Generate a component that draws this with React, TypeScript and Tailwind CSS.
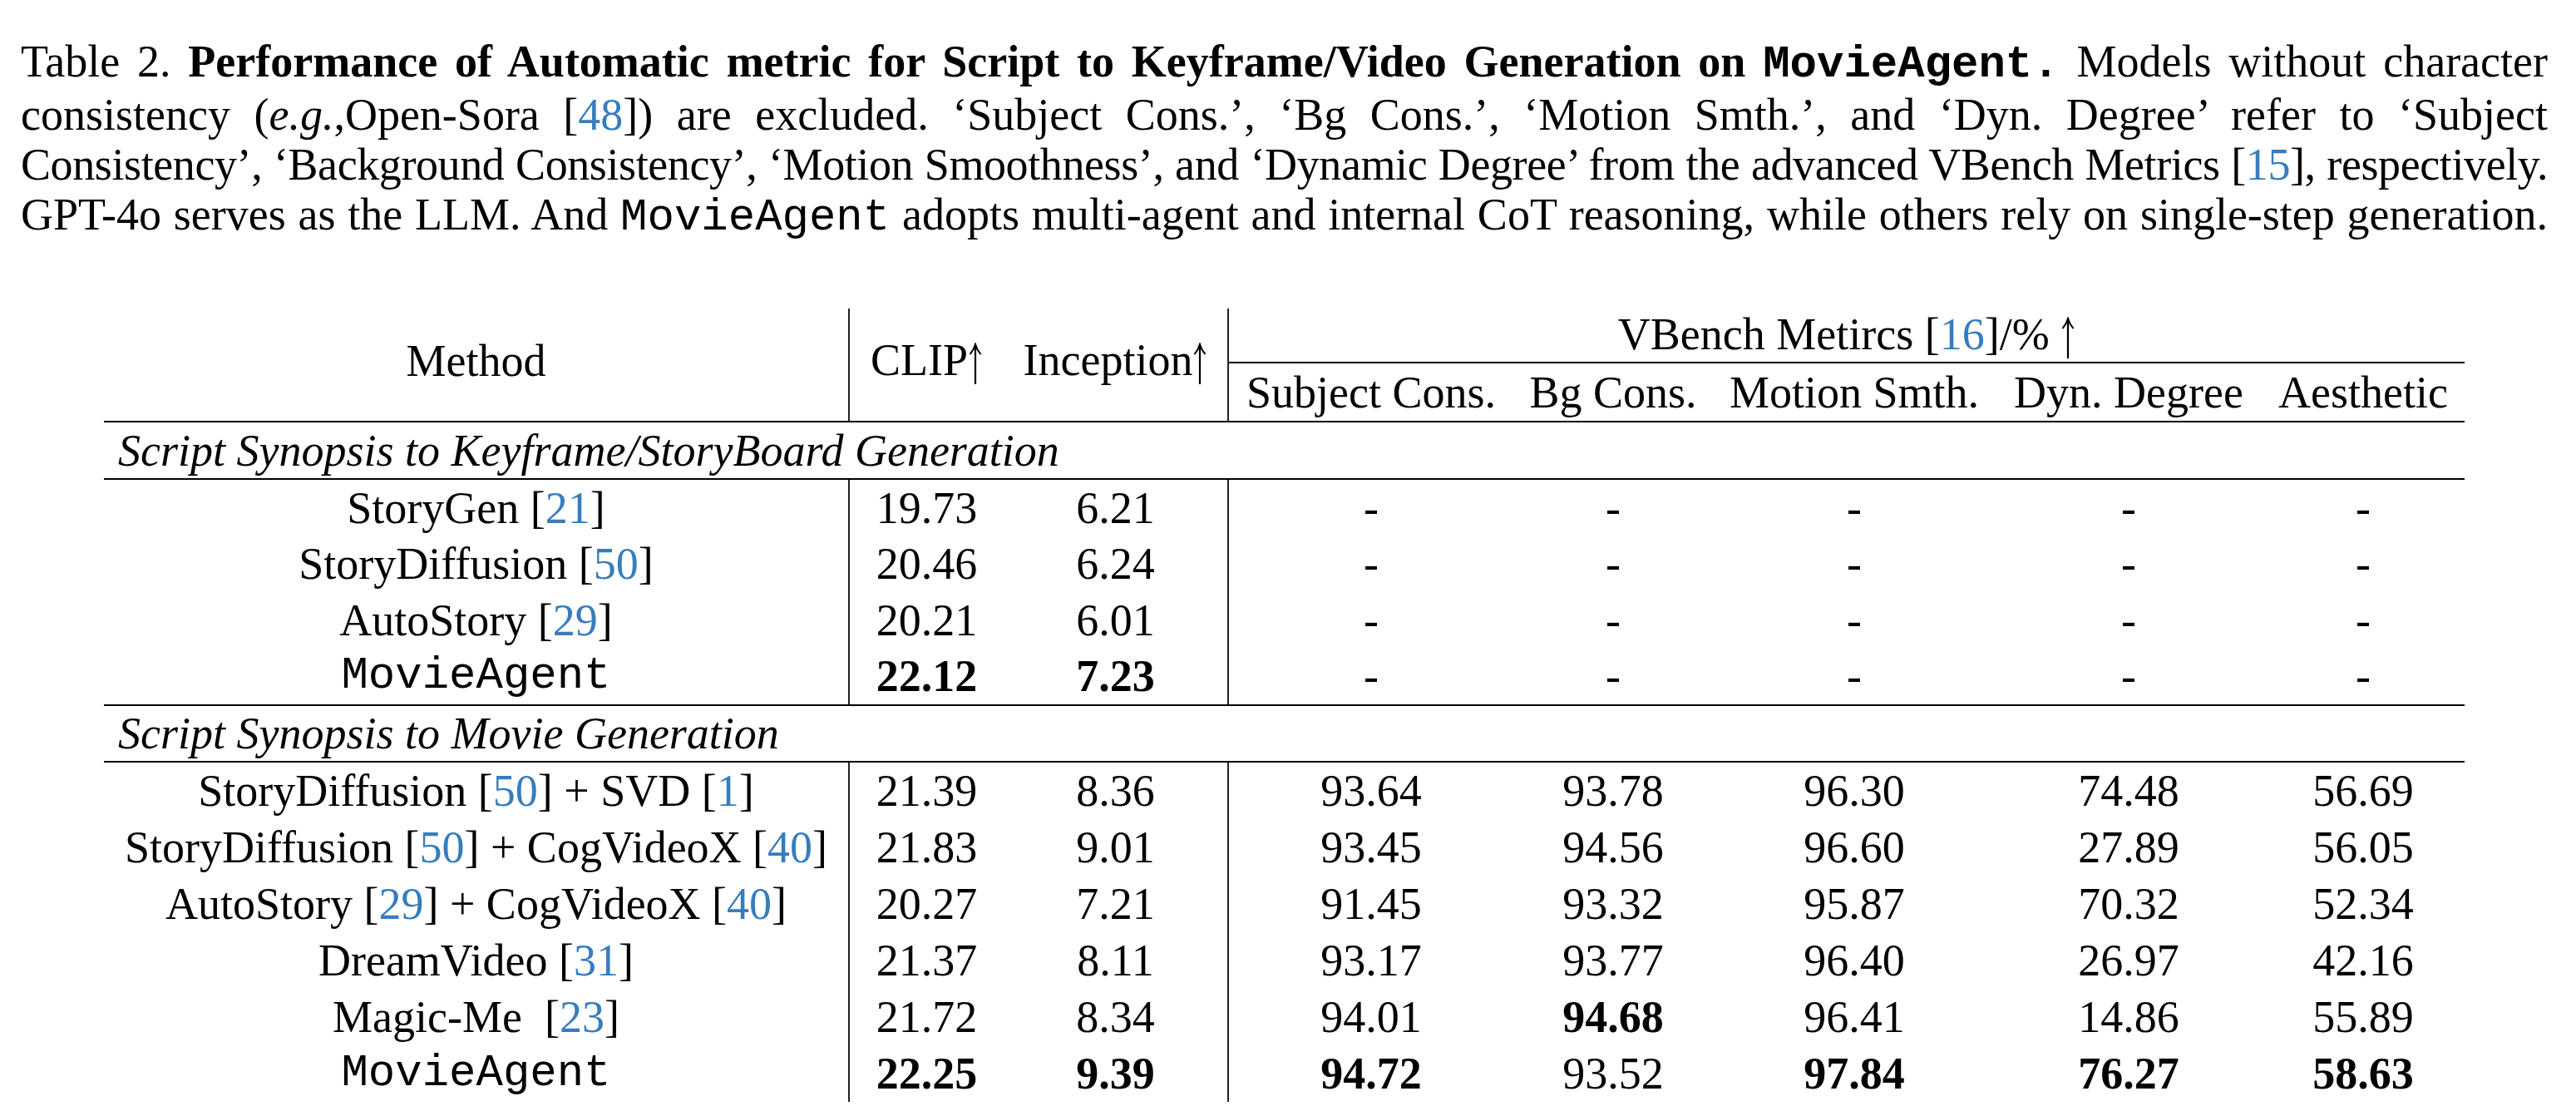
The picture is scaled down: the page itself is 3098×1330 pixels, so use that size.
import React from "react";

const C = ({ n }: { n: string }) => (
  <span>
    [<span className="text-[#367dbd]">{n}</span>]
  </span>
);

const Up = () => (
  <svg width="18" height="50" viewBox="0 0 18 50" className="inline-block align-[-11px]" fill="none">
    <path d="M9 3 V50" stroke="black" strokeWidth="2.2" />
    <path d="M2.5 14 Q7 9 9 2 Q11 9 15.5 14" stroke="black" strokeWidth="2" />
  </svg>
);

const Mono = ({ children, bold }: { children: React.ReactNode; bold?: boolean }) => (
  <span className={"font-['Liberation_Mono','Courier_New',monospace] " + (bold ? "font-bold" : "font-normal")}>
    {children}
  </span>
);

const COLS = [342, 240, 340, 320, 244];

const Rule = () => <div className="h-[2px] w-full bg-black" />;

type Row = { m: React.ReactNode; clip: string; inc: string; v: string[]; b?: boolean[] };

const sec1: Row[] = [
  { m: <span>StoryGen <C n="21" /></span>, clip: "19.73", inc: "6.21", v: ["-", "-", "-", "-", "-"] },
  { m: <span>StoryDiffusion <C n="50" /></span>, clip: "20.46", inc: "6.24", v: ["-", "-", "-", "-", "-"] },
  { m: <span>AutoStory <C n="29" /></span>, clip: "20.21", inc: "6.01", v: ["-", "-", "-", "-", "-"] },
  {
    m: <Mono>MovieAgent</Mono>,
    clip: "22.12",
    inc: "7.23",
    v: ["-", "-", "-", "-", "-"],
    b: [true, true, false, false, false, false, false],
  },
];

const sec2: Row[] = [
  {
    m: <span>StoryDiffusion <C n="50" /> + SVD <C n="1" /></span>,
    clip: "21.39",
    inc: "8.36",
    v: ["93.64", "93.78", "96.30", "74.48", "56.69"],
  },
  {
    m: <span>StoryDiffusion <C n="50" /> + CogVideoX <C n="40" /></span>,
    clip: "21.83",
    inc: "9.01",
    v: ["93.45", "94.56", "96.60", "27.89", "56.05"],
  },
  {
    m: <span>AutoStory <C n="29" /> + CogVideoX <C n="40" /></span>,
    clip: "20.27",
    inc: "7.21",
    v: ["91.45", "93.32", "95.87", "70.32", "52.34"],
  },
  { m: <span>DreamVideo <C n="31" /></span>, clip: "21.37", inc: "8.11", v: ["93.17", "93.77", "96.40", "26.97", "42.16"] },
  {
    m: <span>Magic-Me{"\u00a0"} <C n="23" /></span>,
    clip: "21.72",
    inc: "8.34",
    v: ["94.01", "94.68", "96.41", "14.86", "55.89"],
    b: [false, false, false, true, false, false, false],
  },
  {
    m: <Mono>MovieAgent</Mono>,
    clip: "22.25",
    inc: "9.39",
    v: ["94.72", "93.52", "97.84", "76.27", "58.63"],
    b: [true, true, true, false, true, true, true],
  },
];

const DataRow = ({ r, h }: { r: Row; h: string }) => {
  const b = r.b || [];
  return (
    <div className={"flex " + h}>
      <div className="w-[897px] shrink-0 flex items-center justify-center border-r-2 border-[#222]">{r.m}</div>
      <div className={"w-[185px] shrink-0 flex items-center justify-center " + (b[0] ? "font-bold" : "")}>{r.clip}</div>
      <div className={"w-[271px] shrink-0 flex items-center justify-center border-r-2 border-[#222] " + (b[1] ? "font-bold" : "")}>
        {r.inc}
      </div>
      {r.v.map((x, i) => (
        <div
          key={i}
          style={{ width: COLS[i] }}
          className={"shrink-0 flex items-center justify-center " + (b[i + 2] ? "font-bold" : "")}
        >
          {x}
        </div>
      ))}
    </div>
  );
};

export default function App() {
  return (
    <div className="w-[3098px] h-[1330px] overflow-hidden bg-white text-black font-['Liberation_Serif','Times_New_Roman',serif] text-[54px]">
      {/* Caption */}
      <div className="pl-[25px] pt-[44px] w-[3064px] leading-[60px]">
        <p className="text-justify [text-align-last:justify] whitespace-nowrap">
          Table 2. <b>Performance of Automatic metric for Script to Keyframe/Video Generation on </b>
          <Mono bold>MovieAgent.</Mono> Models without character
        </p>
        <p className="text-justify [text-align-last:justify] whitespace-nowrap">
          consistency (<i>e.g.</i>,Open-Sora <C n="48" />) are excluded. ‘Subject Cons.’, ‘Bg Cons.’, ‘Motion Smth.’, and ‘Dyn. Degree’ refer to ‘Subject
        </p>
        <p className="text-justify [text-align-last:justify] whitespace-nowrap tracking-[-0.4px] [word-spacing:-2px]">
          Consistency’, ‘Background Consistency’, ‘Motion Smoothness’, and ‘Dynamic Degree’ from the advanced VBench Metrics <C n="15" />, respectively.
        </p>
        <p className="text-justify [text-align-last:justify] whitespace-nowrap">
          GPT-4o serves as the LLM. And <Mono>MovieAgent</Mono> adopts multi-agent and internal CoT reasoning, while others rely on single-step generation.
        </p>
      </div>

      {/* Table */}
      <div className="ml-[125px] mt-[79px] w-[2839px] leading-none whitespace-nowrap">
        {/* header */}
        <div className="flex h-[135px]">
          <div className="w-[897px] shrink-0 flex items-center justify-center border-r-2 border-[#222] pb-[10px]">Method</div>
          <div className="w-[185px] shrink-0 flex items-center justify-center pb-[10px]">
            <span>
              CLIP
              <Up />
            </span>
          </div>
          <div className="w-[271px] shrink-0 flex items-center justify-center border-r-2 border-[#222] pb-[10px]">
            <span>
              Inception
              <Up />
            </span>
          </div>
          <div className="flex-1 flex flex-col">
            <div className="h-[66px] flex items-center justify-center border-b-2 border-black">
              <span>
                VBench Metircs <C n="16" />/% <Up />
              </span>
            </div>
            <div className="flex flex-1">
              {["Subject Cons.", "Bg Cons.", "Motion Smth.", "Dyn. Degree", "Aesthetic"].map((t, i) => (
                <div key={i} style={{ width: COLS[i] }} className="shrink-0 flex items-center justify-center">
                  {t}
                </div>
              ))}
            </div>
          </div>
        </div>
        <Rule />
        <div className="h-[67px] flex items-center pl-[17px] italic">Script Synopsis to Keyframe/StoryBoard Generation</div>
        <Rule />
        {sec1.map((r, i) => (
          <DataRow key={i} r={r} h="h-[67.5px]" />
        ))}
        <Rule />
        <div className="h-[66px] flex items-center pl-[17px] italic">Script Synopsis to Movie Generation</div>
        <Rule />
        {sec2.map((r, i) => (
          <DataRow key={i} r={r} h="h-[68px]" />
        ))}
      </div>
    </div>
  );
}
